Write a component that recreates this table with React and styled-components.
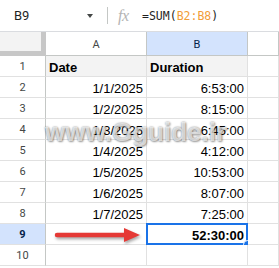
import React from "react";
import styled, { createGlobalStyle } from "styled-components";

const Global = createGlobalStyle`
  html, body { margin: 0; padding: 0; background: #fff; }
  body { width: 279px; height: 268px; overflow: hidden; font-family: "Liberation Sans", Arial, sans-serif; }
`;

const Page = styled.div`
  position: relative;
  width: 279px;
  height: 268px;
  overflow: hidden;
  background: #fff;
`;

const Toolbar = styled.div`
  display: flex;
  align-items: center;
  height: 31px;
  border-bottom: 1px solid #dadce0;
`;

const NameBox = styled.div`
  display: flex;
  align-items: center;
  width: 107px;
  padding-left: 14px;
  box-sizing: border-box;
  font: 13px Roboto, "Liberation Sans", sans-serif;
  color: #1f1f1f;
`;

const NameText = styled.span`
  flex: 1;
`;

const Caret = styled.span`
  width: 0;
  height: 0;
  border-left: 3.5px solid transparent;
  border-right: 3.5px solid transparent;
  border-top: 4px solid #444746;
  margin-right: 14px;
`;

const Divider = styled.span`
  width: 1px;
  height: 17px;
  background: #c4c7c5;
`;

const FxIcon = styled.span`
  margin-left: 10px;
  width: 16px;
  font: italic 16px "Liberation Serif", serif;
  color: #b4b4b4;
  letter-spacing: -0.5px;
  line-height: 16px;
`;

const Formula = styled.span`
  margin-left: 8px;
  font: 11.5px "DejaVu Sans Mono", "Liberation Mono", monospace;
  color: #1f1f1f;
`;

const Range = styled.span`
  color: #f29d38;
`;

const Sheet = styled.div`
  display: grid;
  grid-template-columns: 46px 101px 101px 1fr;
  grid-template-rows: 24px;
  grid-auto-rows: 21px;
`;

const Corner = styled.div`
  box-sizing: border-box;
  background: #f3f3f3;
  border-right: 5px solid #c7c7c7;
  border-bottom: 5px solid #c7c7c7;
`;

const ColHead = styled.div`
  box-sizing: border-box;
  display: flex;
  align-items: center;
  justify-content: center;
  border-right: 1px solid #c4c7c5;
  border-bottom: 1px solid #c4c7c5;
  background: ${(p) => (p.$active ? "#d3e3fd" : "#fff")};
  color: ${(p) => (p.$active ? "#041e49" : "#444746")};
  font: 11px Roboto, "Liberation Sans", sans-serif;
  padding-top: 1px;
`;

const RowHead = styled.div`
  box-sizing: border-box;
  display: flex;
  align-items: center;
  justify-content: center;
  border-right: 1px solid #c4c7c5;
  border-bottom: 1px solid #e1e1e1;
  background: ${(p) => (p.$active ? "#d3e3fd" : "#fff")};
  color: ${(p) => (p.$active ? "#041e49" : "#444746")};
  font: ${(p) => (p.$active ? 700 : 400)} 11px Roboto, "Liberation Sans", sans-serif;
  padding-top: 1px;
`;

const Cell = styled.div`
  position: relative;
  box-sizing: border-box;
  display: flex;
  align-items: flex-end;
  justify-content: ${(p) => (p.$right ? "flex-end" : "flex-start")};
  padding: 0 3px 0 3px;
  border-right: 1px solid #e1e1e1;
  border-bottom: 1px solid #e1e1e1;
  background: ${(p) => p.$bg || "#fff"};
  font-size: 13px;
  line-height: 16px;
  font-weight: ${(p) => (p.$bold ? 700 : 400)};
  color: #000;
  white-space: nowrap;
`;

const Selection = styled.div`
  position: absolute;
  left: -1px;
  top: -1px;
  right: -1px;
  bottom: -1px;
  border: 2px solid #1a73e8;
  pointer-events: none;
`;

const Handle = styled.div`
  position: absolute;
  right: -5px;
  bottom: -5px;
  width: 7px;
  height: 7px;
  border-radius: 50%;
  background: #1a73e8;
  border: 1px solid #fff;
`;

const ArrowSvg = styled.svg`
  position: absolute;
  left: 8px;
  top: 2px;
  overflow: visible;
  filter: drop-shadow(1px 2px 1.5px rgba(0, 0, 0, 0.35));
`;

const Watermark = styled.div`
  position: absolute;
  left: 45px;
  top: 119px;
  font: 700 26px/26px "Liberation Sans", Arial, sans-serif;
  color: rgba(255, 255, 255, 0.7);
  text-shadow: 0 0 2px rgba(0, 0, 0, 0.45), 1px 1px 2px rgba(0, 0, 0, 0.3);
  pointer-events: none;
  white-space: nowrap;
`;

const rows = [
  ["Date", "Duration"],
  ["1/1/2025", "6:53:00"],
  ["1/2/2025", "8:15:00"],
  ["1/3/2025", "6:45:00"],
  ["1/4/2025", "4:12:00"],
  ["1/5/2025", "10:53:00"],
  ["1/6/2025", "8:07:00"],
  ["1/7/2025", "7:25:00"],
  [null, "52:30:00"],
  [null, null],
];

function Arrow() {
  return (
    <ArrowSvg width="90" height="20" viewBox="0 0 90 20">
      <line x1="3" y1="9" x2="74" y2="9" stroke="#e53935" strokeWidth="4.5" strokeLinecap="round" />
      <polygon points="70,2 86,9 70,16" fill="#e53935" />
    </ArrowSvg>
  );
}

export default function App() {
  return (
    <Page>
      <Global />
      <Toolbar>
        <NameBox>
          <NameText>B9</NameText>
          <Caret />
        </NameBox>
        <Divider />
        <FxIcon>fx</FxIcon>
        <Formula>
          =SUM(<Range>B2:B8</Range>)
        </Formula>
      </Toolbar>
      <Sheet>
        <Corner />
        <ColHead>A</ColHead>
        <ColHead $active>B</ColHead>
        <ColHead />
        {rows.map((r, i) => {
          const n = i + 1;
          const header = n === 1;
          const total = n === 9;
          return (
            <React.Fragment key={n}>
              <RowHead $active={total}>{n}</RowHead>
              <Cell $right={!header} $bold={header} $bg={header ? "#f3f3f3" : undefined}>
                {r[0]}
                {total && <Arrow />}
              </Cell>
              <Cell $right={!header} $bold={header || total} $bg={header ? "#f3f3f3" : undefined}>
                {r[1]}
                {total && (
                  <>
                    <Selection />
                    <Handle />
                  </>
                )}
              </Cell>
              <Cell />
            </React.Fragment>
          );
        })}
      </Sheet>
      <Watermark>www.Gguide.ir</Watermark>
    </Page>
  );
}
